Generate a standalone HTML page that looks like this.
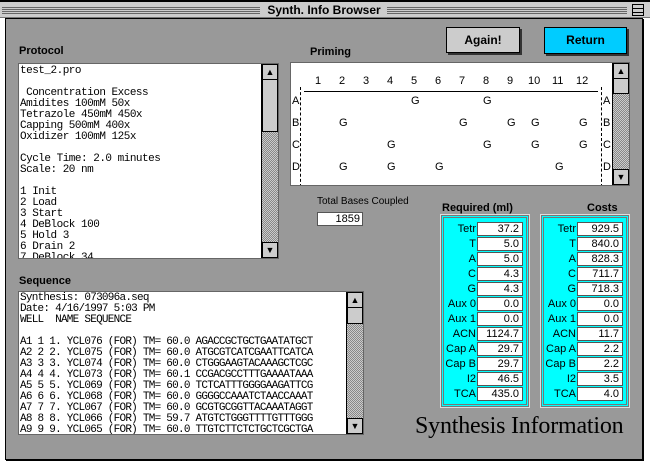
<!DOCTYPE html>
<html><head><style>
*{margin:0;padding:0;box-sizing:border-box}
body{width:650px;height:467px;background:#fff;position:relative;overflow:hidden;font-family:"Liberation Sans",Arial,sans-serif;font-size:11px;color:#000}
.a{position:absolute}
.win{left:5px;top:18px;width:638px;height:442px;background:#999;border:1px solid #000;box-shadow:1px 1px 0 #000}
.stripes{background:repeating-linear-gradient(#ccc 0 1px,#666 1px 2px)}
.lbl{font-weight:bold;font-size:11px}
.box{background:#fff;border:1px solid #666;overflow:hidden}
.sb{position:absolute;right:0;top:0;bottom:0;width:17px;border-left:1px solid #000;background:repeating-conic-gradient(#888 0 25%,#ccc 0 50%) 0 0/2px 2px}
.ar{position:absolute;left:0;width:16px;height:16px;background:#ccc;border:1px solid #000;font-size:9px;text-align:center;line-height:14px}
.th{position:absolute;left:0;width:16px;background:#ccc;border:1px solid #000}
.mono{font-family:"Liberation Mono",monospace;font-size:11px;line-height:11px;white-space:pre;letter-spacing:-0.6px}
.pnl{background:#0ff;border:3px double #777;outline:1px solid #ddd}
.row{position:absolute;left:0;height:14px;width:100%}
.row .l{position:absolute;right:50px;top:1px;font-size:11px}
.row .v{position:absolute;right:3px;width:46px;height:14px;background:#fff;border:1px solid #555;text-align:right;padding-right:3px;font-size:11px;line-height:12px}
.btn{font-weight:bold;font-size:12px;text-align:center;border:1px solid #000;box-shadow:2px 2px 0 #333}
.pr span{position:absolute}
</style></head><body>
<div class="a" style="left:0;top:0;width:650px;height:2px;background:#000"></div>
<div class="a" style="left:0;top:2px;width:650px;height:16px;background:#ccc;border-bottom:1px solid #777"></div>
<div class="a stripes" style="left:2px;top:6px;width:258px;height:9px"></div>
<div class="a stripes" style="left:387px;top:6px;width:240px;height:9px"></div>
<div class="a" style="left:262px;top:3px;width:124px;text-align:center;font-weight:bold;font-size:12px;">Synth. Info Browser</div>
<div class="a" style="left:632px;top:4px;width:12px;height:12px;border:1px solid #000;background:repeating-linear-gradient(#ccc 0 3px,#000 3px 4px)"></div>
<div class="a win"></div>

<div class="a lbl" style="left:19px;top:45px">Protocol</div>
<div class="a box" style="left:18px;top:63px;width:261px;height:196px">
<div class="mono" style="position:absolute;left:1px;top:2px;letter-spacing:-0.5px">test_2.pro

 Concentration Excess
Amidites 100mM 50x
Tetrazole 450mM 450x
Capping 500mM 400x
Oxidizer 100mM 125x

Cycle Time: 2.0 minutes
Scale: 20 nm

1 Init
2 Load
3 Start
4 DeBlock 100
5 Hold 3
6 Drain 2
7 DeBlock 34</div>
<div class="sb"><div class="ar" style="top:0">&#9650;</div><div class="th" style="top:15px;height:53px"></div><div class="ar" style="bottom:0">&#9660;</div></div>
</div>

<div class="a lbl" style="left:310px;top:46px">Priming</div>
<div class="a box" style="left:290px;top:62px;width:340px;height:124px">
<div class="a pr" style="left:10px;top:12px;width:300px;font-size:11px">
<span style="left:14px">1</span><span style="left:38px">2</span><span style="left:62px">3</span><span style="left:86px">4</span><span style="left:110px">5</span><span style="left:134px">6</span><span style="left:158px">7</span><span style="left:182px">8</span><span style="left:206px">9</span><span style="left:227px">10</span><span style="left:251px">11</span><span style="left:275px">12</span></div>
<div class="a" style="left:13px;top:28px;width:294px;height:1px;background:#000"></div>
<div class="a" style="left:9px;top:24px;width:0;height:100px;border-left:1px dashed #000"></div>
<div class="a" style="left:310px;top:24px;width:0;height:100px;border-left:1px dashed #000"></div>
<div class="a pr" style="left:0;top:32px;width:320px;font-size:11px">
<span style="left:1px;top:0">A</span><span style="left:312px;top:0">A</span>
<span style="left:1px;top:22px">B</span><span style="left:312px;top:22px">B</span>
<span style="left:1px;top:44px">C</span><span style="left:312px;top:44px">C</span>
<span style="left:1px;top:66px">D</span><span style="left:312px;top:66px">D</span>
<span style="left:120px;top:0">G</span><span style="left:192px;top:0">G</span>
<span style="left:48px;top:22px">G</span><span style="left:168px;top:22px">G</span><span style="left:216px;top:22px">G</span><span style="left:240px;top:22px">G</span><span style="left:288px;top:22px">G</span>
<span style="left:96px;top:44px">G</span><span style="left:192px;top:44px">G</span><span style="left:240px;top:44px">G</span><span style="left:288px;top:44px">G</span>
<span style="left:48px;top:66px">G</span><span style="left:96px;top:66px">G</span><span style="left:144px;top:66px">G</span><span style="left:264px;top:66px">G</span></div>
<div class="sb"><div class="ar" style="top:0">&#9650;</div><div class="th" style="top:15px;height:16px"></div><div class="ar" style="bottom:0">&#9660;</div></div>
</div>

<div class="a btn" style="left:446px;top:27px;width:74px;height:26px;background:#ccc;line-height:24px">Again!</div>
<div class="a btn" style="left:544px;top:27px;width:83px;height:27px;background:#00ccff;line-height:25px">Return</div>

<div class="a" style="left:317px;top:196px;font-size:10px">Total Bases Coupled</div>
<div class="a" style="left:317px;top:212px;width:46px;height:14px;background:#fff;border:1px solid #555;text-align:right;padding-right:2px;font-size:11px;line-height:12px">1859</div>

<div class="a lbl" style="left:442px;top:202px">Required (ml)</div>
<div class="a lbl" style="left:587px;top:202px">Costs</div>

<div class="a pnl" style="left:441px;top:215px;width:88px;height:192px">
<div class="row" style="top:4px"><span class="l">Tetr</span><span class="v">37.2</span></div>
<div class="row" style="top:19px"><span class="l">T</span><span class="v">5.0</span></div>
<div class="row" style="top:34px"><span class="l">A</span><span class="v">5.0</span></div>
<div class="row" style="top:49px"><span class="l">C</span><span class="v">4.3</span></div>
<div class="row" style="top:64px"><span class="l">G</span><span class="v">4.3</span></div>
<div class="row" style="top:79px"><span class="l">Aux 0</span><span class="v">0.0</span></div>
<div class="row" style="top:94px"><span class="l">Aux 1</span><span class="v">0.0</span></div>
<div class="row" style="top:109px"><span class="l">ACN</span><span class="v">1124.7</span></div>
<div class="row" style="top:124px"><span class="l">Cap A</span><span class="v">29.7</span></div>
<div class="row" style="top:139px"><span class="l">Cap B</span><span class="v">29.7</span></div>
<div class="row" style="top:154px"><span class="l">I2</span><span class="v">46.5</span></div>
<div class="row" style="top:169px"><span class="l">TCA</span><span class="v">435.0</span></div>
</div>
<div class="a pnl" style="left:541px;top:215px;width:88px;height:192px">
<div class="row" style="top:4px"><span class="l">Tetr</span><span class="v">929.5</span></div>
<div class="row" style="top:19px"><span class="l">T</span><span class="v">840.0</span></div>
<div class="row" style="top:34px"><span class="l">A</span><span class="v">828.3</span></div>
<div class="row" style="top:49px"><span class="l">C</span><span class="v">711.7</span></div>
<div class="row" style="top:64px"><span class="l">G</span><span class="v">718.3</span></div>
<div class="row" style="top:79px"><span class="l">Aux 0</span><span class="v">0.0</span></div>
<div class="row" style="top:94px"><span class="l">Aux 1</span><span class="v">0.0</span></div>
<div class="row" style="top:109px"><span class="l">ACN</span><span class="v">11.7</span></div>
<div class="row" style="top:124px"><span class="l">Cap A</span><span class="v">2.2</span></div>
<div class="row" style="top:139px"><span class="l">Cap B</span><span class="v">2.2</span></div>
<div class="row" style="top:154px"><span class="l">I2</span><span class="v">3.5</span></div>
<div class="row" style="top:169px"><span class="l">TCA</span><span class="v">4.0</span></div>
</div>

<div class="a lbl" style="left:19px;top:275px">Sequence</div>
<div class="a box" style="left:18px;top:291px;width:346px;height:144px">
<div class="mono" style="position:absolute;left:1px;top:1px;letter-spacing:-0.75px">Synthesis: 073096a.seq
Date: 4/16/1997 5:03 PM
WELL  NAME SEQUENCE

A1 1 1. YCL076 (FOR) TM= 60.0 AGACCGCTGCTGAATATGCT
A2 2 2. YCL075 (FOR) TM= 60.0 ATGCGTCATCGAATTCATCA
A3 3 3. YCL074 (FOR) TM= 60.0 CTGGGAAGTACAAAGCTCGC
A4 4 4. YCL073 (FOR) TM= 60.1 CCGACGCCTTTGAAAATAAA
A5 5 5. YCL069 (FOR) TM= 60.0 TCTCATTTGGGGAAGATTCG
A6 6 6. YCL068 (FOR) TM= 60.0 GGGGCCAAATCTAACCAAAT
A7 7 7. YCL067 (FOR) TM= 60.0 GCGTGCGGTTACAAATAGGT
A8 8 8. YCL066 (FOR) TM= 59.7 ATGTCTGGGTTTTGTTTGGG
A9 9 9. YCL065 (FOR) TM= 60.0 TTGTCTTCTCTGCTCGCTGA</div>
<div class="sb"><div class="ar" style="top:0">&#9650;</div><div class="th" style="top:15px;height:17px"></div><div class="ar" style="bottom:0">&#9660;</div></div>
</div>

<div class="a" style="left:415px;top:413px;font-family:'Liberation Serif',serif;font-size:24px;letter-spacing:-0.2px">Synthesis Information</div>
</body></html>
